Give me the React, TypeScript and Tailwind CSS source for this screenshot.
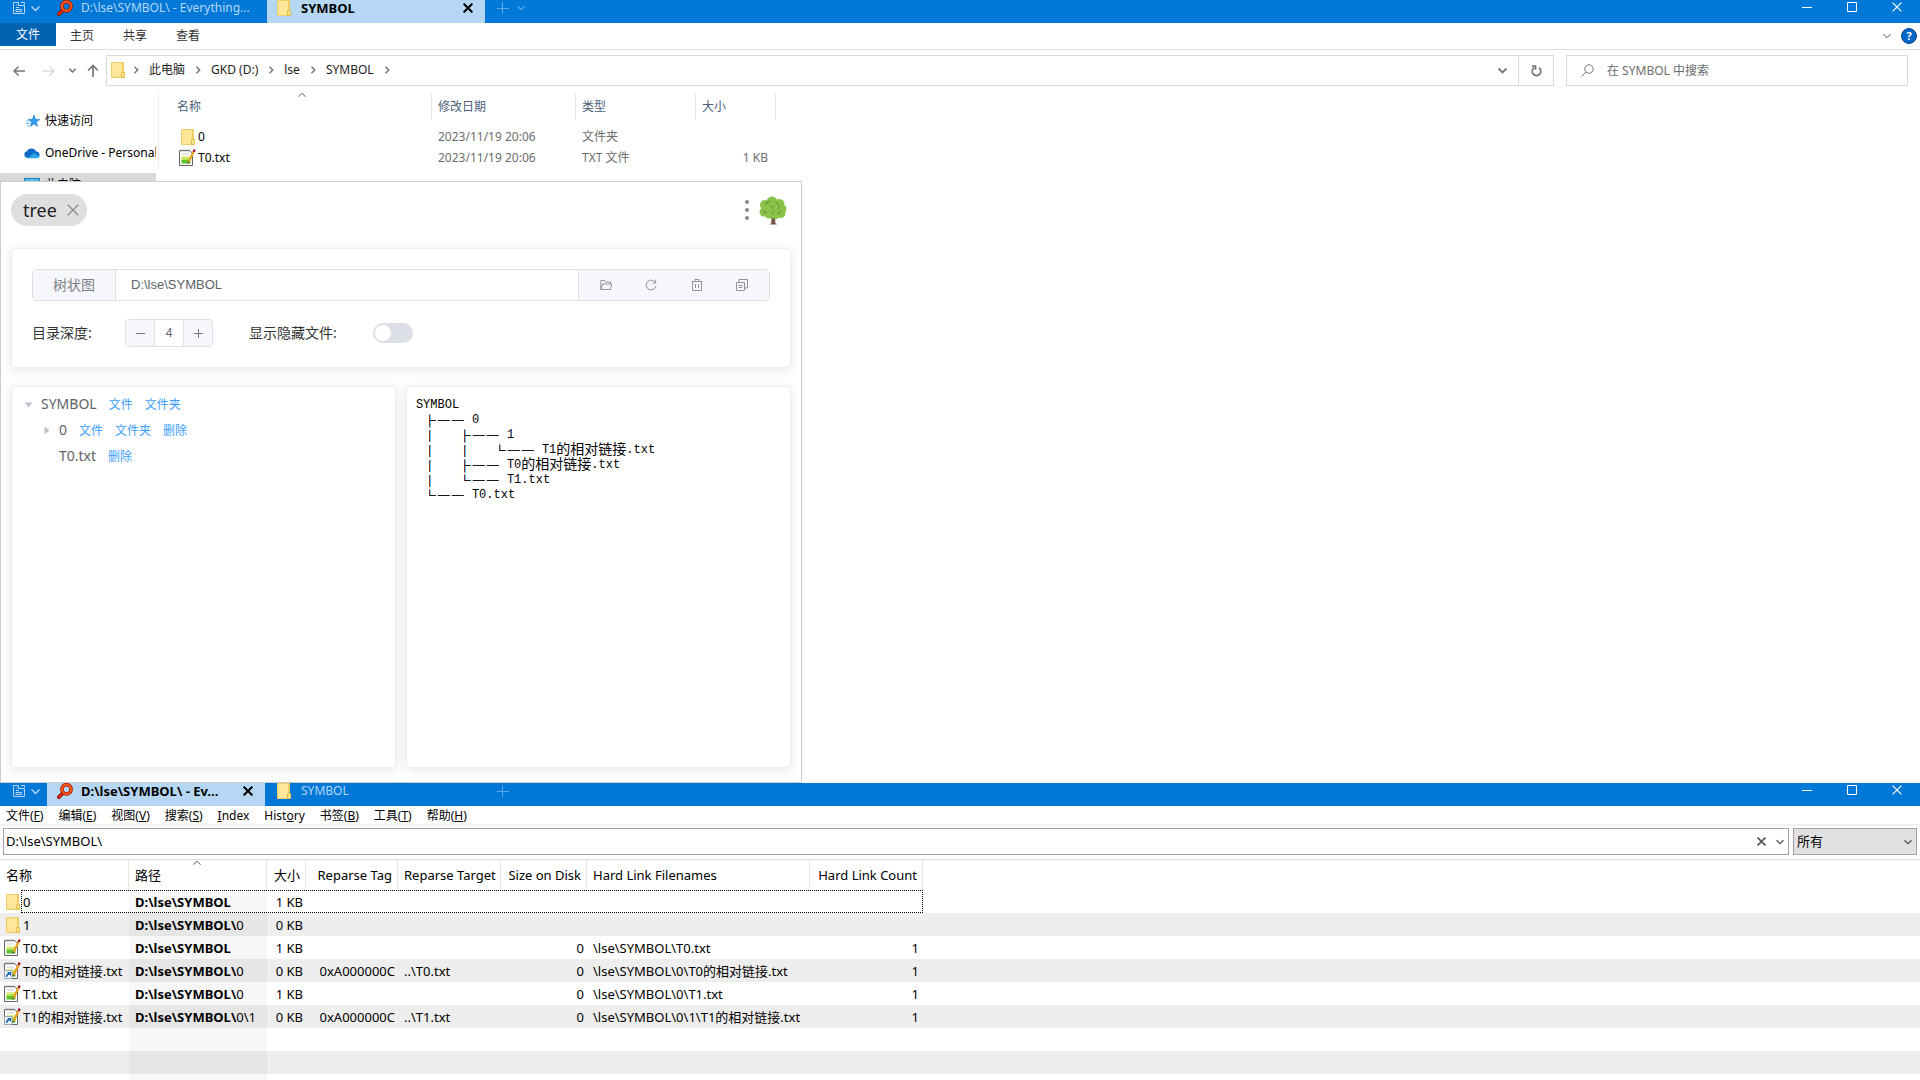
import type { ReactNode } from 'react'

const FolderIcon = () => (
  <svg width="14" height="16" viewBox="0 0 14 16" className="shrink-0">
    <path d="M.5.5h11v15H.5z" fill="#ffe699" stroke="#f0cd62" />
    <path d="M11.5.5h1v9h-1z" fill="#ffe699" stroke="#f0cd62" />
    <path d="M10.500 10.500h3v5h-3z" fill="#ffe38c" stroke="#e5bd47" />
  </svg>
)

const NoteIcon = ({ link }: { link?: boolean }) => (
  <svg width="17" height="17" viewBox="0 0 17 17" className="shrink-0">
    <path d="M.5 1.500h10l3 3v12H.5z" fill="#fff" stroke="#666" />
    <path d="M2 .5v2M4 .5v2M6 .5v2M8 .5v2M10 .5v2" stroke="#888" strokeWidth="1" />
    <path d="M2.500 7h9v3h-9z" fill="#e3f08e" />
    <path d="M2.500 9h9v2.500h-9z" fill="#b5e05a" />
    <path d="M2.500 11h9v3.500h-9z" fill="#5cc22a" />
    <path d="M3 5h7" stroke="#ccc" />
    <path d="M9.500 13l5-10" stroke="#e8a21c" strokeWidth="2.200" />
    <path d="M8.500 15l.2-2.500 1.800 1z" fill="#443" />
    <path d="M14.500 3l1.200-2.500" stroke="#9b1220" strokeWidth="2.200" />
    {link && (
      <>
        <path d="M.5 8.500H8v8H.5z" fill="#f4f8fc" stroke="#9aa7b5" />
        <path d="M2.500 15c0-1.800.8-2.800 2.500-3.300" fill="none" stroke="#1762b8" strokeWidth="1.500" />
        <path d="M3 10h4v4z" fill="#1762b8" />
      </>
    )}
  </svg>
)

const EverythingIcon = () => (
  <svg width="16" height="16" viewBox="0 0 16 16" className="shrink-0">
    <path d="M6 10L1.800 14.200" stroke="#8f1200" strokeWidth="3.800" strokeLinecap="round" />
    <path d="M6 10L1.800 14.200" stroke="#e02f0c" strokeWidth="2.200" strokeLinecap="round" />
    <circle cx="9.500" cy="6.300" r="4.600" fill="none" stroke="#9b1500" strokeWidth="3.600" />
    <circle cx="9.500" cy="6.300" r="4.600" fill="none" stroke="#ff5416" strokeWidth="2.200" />
  </svg>
)

const Chevron = ({ dir = 'down', size = 8, width = 1.3 }: { dir?: 'down' | 'up' | 'right'; size?: number; width?: number }) => (
  <svg width={size} height={size} viewBox="0 0 8 8" fill="none" stroke="currentColor" strokeWidth={width} className="shrink-0">
    <path d={{ down: 'M.5 2.200L4 5.700l3.500-3.500', up: 'M.5 5.700L4 2.200l3.500 3.500', right: 'M2.500.8L5.700 4 2.500 7.200' }[dir]} />
  </svg>
)

const Cross = ({ size = 10, width = 1.2 }: { size?: number; width?: number }) => (
  <svg width={size} height={size} viewBox="0 0 10 10" stroke="currentColor" strokeWidth={width} className="shrink-0">
    <path d="M.6.6l8.800 8.800M9.400.6L.6 9.400" />
  </svg>
)

const Plus = () => (
  <svg width="12" height="12" viewBox="0 0 12 12" stroke="currentColor" className="shrink-0">
    <path d="M0 6.500h12M5.500 0v12" />
  </svg>
)

const TreeLogo = () => (
  <svg width="28" height="29" viewBox="0 0 28 29" className="shrink-0">
    <path d="M12.500 18h3.500l.3 9 1.700 1.500h-7l1.300-1.500z" fill="#795548" />
    <g fill="#8bc34a">
      <circle cx="13" cy="6" r="5.500" />
      <circle cx="6" cy="9" r="5" />
      <circle cx="20.500" cy="8" r="5" />
      <circle cx="5" cy="16" r="4.500" />
      <circle cx="23.500" cy="13" r="4" />
      <circle cx="22" cy="17.500" r="4.500" />
      <circle cx="10" cy="18.500" r="4" />
      <circle cx="16.500" cy="19" r="4" />
      <circle cx="14" cy="12" r="8" />
    </g>
    <path
      d="M6 10c.5-3 2-4 4-4.300M8 7.500c1-2 2-2.300 4-2.500M16 6c2 .3 3 1.500 3.500 3M20 9.500c.5 1.500 0 2.500-1 3M11 10c2 0 3 1.500 3 3.500M5 14c0 2 1 3 3 3.300M13 18c.3-2 1-2.500 2.500-3M18 17.500c2 0 3-.8 3.500-2.500"
      fill="none"
      stroke="#689f38"
      strokeWidth="1.200"
    />
  </svg>
)

const WindowButtons = () => (
  <div className="ml-auto mr-[18px] flex h-[14px] items-center gap-[35px] text-white">
    <button aria-label="最小化">
      <svg width="10" height="10" viewBox="0 0 10 10" stroke="currentColor"><path d="M0 5.500h10" /></svg>
    </button>
    <button aria-label="最大化">
      <svg width="10" height="10" viewBox="0 0 10 10" fill="none" stroke="currentColor"><path d="M.5.5h9v9h-9z" /></svg>
    </button>
    <button aria-label="关闭"><Cross /></button>
  </div>
)

const TabMenu = () => (
  <div className="flex h-4 w-[47px] shrink-0 items-center gap-[6px] pl-[13px] text-[#b5d7f3]">
    <svg width="12" height="12" viewBox="0 0 12 12" fill="none" stroke="currentColor">
      <path d="M.5.5h5v3h6v8H.5zM8 .5h3.500v2M3 5.500h3M3 7.500h5.500v2H3zM3 3h1" />
    </svg>
    <Chevron size={9} />
  </div>
)

const Tab = ({ icon, title, active }: { icon: ReactNode; title: string; active?: boolean }) => (
  <div className={active ? 'flex h-full w-[218px] shrink-0 bg-[#b5d7f3] text-black' : 'flex h-full w-[218px] shrink-0 text-[#b5d7f3]'}>
    <div className="flex h-[15px] w-full items-center pl-[10px] pr-3">
      <span className="flex w-6 shrink-0">{icon}</span>
      <span className={active ? 'truncate text-[13px] font-bold leading-4' : 'truncate leading-4'}>{title}</span>
      {active && <button aria-label="关闭标签页" className="ml-auto pl-2"><Cross width={2} /></button>}
    </div>
  </div>
)

const Explorer = () => {
  const files = [
    { name: '0', type: '文件夹', size: '', icon: <FolderIcon /> },
    { name: 'T0.txt', type: 'TXT 文件', size: '1 KB', icon: <NoteIcon /> },
  ]
  return (
    <section className="h-[181px] shrink-0 overflow-hidden">
      <header className="flex h-[23px] bg-[#0078d7]">
        <TabMenu />
        <div className="flex w-[220px]"><Tab icon={<EverythingIcon />} title="D:\lse\SYMBOL\ - Everything..." /></div>
        <Tab icon={<FolderIcon />} title="SYMBOL" active />
        <div className="flex h-[15px] items-center gap-2 pl-3 text-[#5ba8e6]">
          <button aria-label="新建标签页"><Plus /></button>
          <Chevron />
        </div>
        <WindowButtons />
      </header>

      <nav className="flex h-[27px] border-b border-[#dadbdc] text-[#333]">
        <button className="h-[23px] w-14 bg-[#0063b1] text-white">文件</button>
        <button className="ml-[14px] h-[25px]">主页</button>
        <button className="ml-[29px] h-[25px]">共享</button>
        <button className="ml-[29px] h-[25px]">查看</button>
        <div className="ml-auto mr-[3px] flex items-center gap-[10px] text-[#999]">
          <Chevron />
          <button aria-label="帮助" className="h-4 w-4 rounded-full border border-[#0b4a86] bg-[#0066c8] text-[11px] font-bold leading-[14px] text-white">?</button>
        </div>
      </nav>

      <div className="flex h-[41px] items-center pr-3 text-[#777]">
        <div className="flex w-[106px] shrink-0 items-center pl-[13px]">
          <svg width="12" height="12" viewBox="0 0 12 12" fill="none" stroke="currentColor" strokeWidth="1.500"><path d="M12 6H1M5.500 1.500L1 6l4.500 4.500" /></svg>
          <svg width="12" height="12" viewBox="0 0 12 12" fill="none" stroke="#ddd" strokeWidth="1.500" className="ml-[18px]"><path d="M0 6h11M6.500 1.500L11 6l-4.500 4.500" /></svg>
          <span className="ml-[14px]"><Chevron size={7} width={1.8} /></span>
          <svg width="12" height="14" viewBox="0 0 12 14" fill="none" stroke="currentColor" strokeWidth="1.700" className="ml-[11px]"><path d="M6 13V2M1 6.500l5-5 5 5" /></svg>
        </div>
        <div className="flex h-[31px] flex-1 border border-[#d9d9d9]">
          <div className="flex flex-1 items-center gap-[9px] pb-px pl-1 text-[#1e1e1e]">
            <span className="flex w-3"><FolderIcon /></span>
            {['此电脑', 'GKD (D:)', 'lse', 'SYMBOL'].map((p) => (
              <span key={p} className="flex items-center gap-[9px]">
                <span className="text-[#777]"><Chevron dir="right" width={1.5} /></span>
                <a href="#">{p}</a>
              </span>
            ))}
            <span className="text-[#777]"><Chevron dir="right" width={1.5} /></span>
            <span className="ml-auto mr-[11px] text-[#777]"><Chevron size={9} width={1.8} /></span>
          </div>
          <button aria-label="刷新" className="flex w-[35px] items-center justify-center border-l border-[#d9d9d9]">
            <svg width="11" height="12" viewBox="0 0 11 12" fill="none" stroke="currentColor" strokeWidth="1.700"><path d="M3 2.800A4.300 4.300 0 1 0 8 2.800M1 1.200h3.500v3.500" /></svg>
          </button>
        </div>
        <label className="ml-3 flex h-[31px] w-[342px] items-center border border-[#d9d9d9] pl-[14px]">
          <svg width="13" height="13" viewBox="0 0 13 13" fill="none" stroke="currentColor" className="shrink-0"><circle cx="8" cy="5" r="4.200" /><path d="M5 8L.5 12.500" /></svg>
          <input aria-label="搜索" placeholder="在 SYMBOL 中搜索" className="ml-[13px] w-full outline-none placeholder:text-[#6d6d6d]" />
        </label>
      </div>

      <div className="flex">
        <aside className="w-[156px] shrink-0 overflow-hidden whitespace-nowrap pt-[14px] text-black">
          <div className="flex h-8 items-center pl-[26px]">
            <svg width="14" height="14" viewBox="0 0 14 14"><path d="M8 1l1.500 4.200 4.300.2-3.400 2.700 1.100 4.200L8 10l-3.600 2.300 1.200-4.200L2.200 5.400l4.300-.2z" fill="#2f9bea" stroke="#1c7ecb" strokeWidth=".6" /><path d="M0 7h3M0 9.500h4M1 12h2.500" stroke="#62b6ef" /></svg>
            <span className="ml-[5px]">快速访问</span>
          </div>
          <div className="flex h-8 items-center pl-6">
            <svg width="16" height="12" viewBox="0 0 16 12" className="shrink-0"><path d="M3.500 11A3.400 3.400 0 0 1 3 4.300 4.900 4.900 0 0 1 12 4.500 3.300 3.300 0 0 1 13 11z" fill="#0f6cc9" /><path d="M3.500 11.200L10 6l5.400 3.300c-.5 1.200-1.400 1.900-2.500 1.900z" fill="#28a8ea" /></svg>
            <span className="ml-[5px]">OneDrive - Personal</span>
          </div>
          <div className="mt-1 flex h-8 items-start bg-[#d9d9d9] pl-6 pt-1">
            <svg width="16" height="14" viewBox="0 0 16 14" className="mt-px"><path d="M.5.5h15v10H.5z" fill="#58bdf5" stroke="#1779b8" /></svg>
            <span className="ml-[5px]">此电脑</span>
          </div>
        </aside>
        <table className="ml-[2px] table-fixed border-separate border-spacing-0 self-start border-l border-[#f0f0f0] text-left text-[#6d6d6d]">
          <colgroup>
            <col className="w-[273px]" /><col className="w-[144px]" /><col className="w-[120px]" /><col className="w-[80px]" />
          </colgroup>
          <thead className="text-[#4c607a]">
            <tr className="h-[35px] align-top">
              {['名称', '修改日期', '类型', '大小'].map((h, i) => (
                <th key={h} className="relative p-0 font-normal">
                  <div className={i ? 'mt-[2px] h-[27px] border-r border-[#e5e5e5] pl-[6px] leading-[28px]' : 'mt-[2px] h-[27px] border-r border-[#e5e5e5] pl-[18px] leading-[28px]'}>{h}</div>
                  {i === 0 && <span className="absolute left-[139px] top-0"><Chevron dir="up" width={1} /></span>}
                </th>
              ))}
            </tr>
          </thead>
          <tbody>
            {files.map((f) => (
              <tr key={f.name} className="h-[21px]">
                <td className="p-0 pl-[18px] text-black">
                  <div className="flex h-[21px] items-center"><span className="flex w-[21px] justify-center">{f.icon}</span>{f.name}</div>
                </td>
                <td className="p-0 pl-[6px]">2023/11/19 20:06</td>
                <td className="p-0 pl-[6px]">{f.type}</td>
                <td className="p-0 pr-2 text-right">{f.size}</td>
              </tr>
            ))}
          </tbody>
        </table>
      </div>
    </section>
  )
}

const card = 'rounded border border-[#ebeef5] bg-white shadow-[0_2px_12px_rgba(0,0,0,0.1)]'

const TreeNode = ({ label, links, indent, caret }: { label: string; links: string[]; indent?: boolean; caret?: 'open' | 'closed' }) => (
  <li className={indent ? 'flex h-[26px] items-center pl-[30px]' : 'flex h-[26px] items-center pl-3'}>
    <span className="flex w-[17px] shrink-0">
      {caret === 'open' && <svg width="9" height="9" viewBox="0 0 9 9" fill="#c0c4cc"><path d="M.5 2.500h8l-4 5z" /></svg>}
      {caret === 'closed' && <svg width="9" height="9" viewBox="0 0 9 9" fill="#c0c4cc"><path d="M2.500.5v8l5-4z" /></svg>}
    </span>
    <span className="text-sm text-[#606266]">{label}</span>
    {links.map((l) => <a key={l} href="#" className="ml-3 pt-px text-xs text-[#409eff]">{l}</a>)}
  </li>
)

// each guide takes a full-width cell, '.' is a half-width gap
const lines = [
  ['', 'SYMBOL'],
  ['.├──.', '0'],
  ['.│...├──.', '1'],
  ['.│...│...└──.', 'T1的相对链接.txt'],
  ['.│...├──.', 'T0的相对链接.txt'],
  ['.│...└──.', 'T1.txt'],
  ['.└──.', 'T0.txt'],
]

const TreePlugin = () => (
  <main className="h-[602px] w-[802px] shrink-0 border border-[#ccc] bg-white px-[10px] pt-3">
    <header className="flex h-8 items-center justify-between">
      <div className="flex h-8 items-center gap-[10px] rounded-full bg-[#dfdfdf] pl-3 pr-2 text-[#222]">
        <h1 className="text-lg">tree</h1>
        <button aria-label="退出" className="text-[#888]"><Cross size={12} width={1} /></button>
      </div>
      <div className="flex items-center gap-[10px] pr-1">
        <button aria-label="更多">
          <svg width="4" height="20" viewBox="0 0 4 20" fill="#888"><circle cx="2" cy="2" r="2" /><circle cx="2" cy="10" r="2" /><circle cx="2" cy="18" r="2" /></svg>
        </button>
        <TreeLogo />
      </div>
    </header>

    <section className={`${card} mt-[22px] p-5`}>
      <div className="flex h-8 rounded border border-[#dcdfe6] text-[#909399]">
        <label htmlFor="root-dir" className="flex w-[83px] items-center justify-center border-r border-[#dcdfe6] bg-[#f5f7fa] text-sm text-[#7d8087]">树状图</label>
        <input id="root-dir" defaultValue="D:\lse\SYMBOL" className="min-w-0 flex-1 pl-[15px] font-['Liberation_Sans',sans-serif] text-[13px] text-[#606266] outline-none" />
        <div className="flex w-[191px] items-center justify-between border-l border-[#dcdfe6] bg-[#f5f7fa] px-[21px]">
          <button aria-label="打开">
            <svg width="12" height="12" viewBox="0 0 12 12" fill="none" stroke="currentColor"><path d="M.8 10.500v-9h3.700l1.200 1.500h4.800v2M.8 10.500L2.700 5h8.800l-1 5.500z" /></svg>
          </button>
          <button aria-label="重新加载">
            <svg width="12" height="12" viewBox="0 0 12 12" fill="none" stroke="currentColor"><path d="M10.300 3.500A4.900 4.900 0 1 0 10.900 7M10.700.8v3.200H7.500" /></svg>
          </button>
          <button aria-label="清空">
            <svg width="12" height="12" viewBox="0 0 12 12" fill="none" stroke="currentColor"><path d="M.5 2.500h11M4 2.500v-2h4v2M1.500 2.500v9h9v-9M4.500 5v4M7.500 5v4" /></svg>
          </button>
          <button aria-label="复制">
            <svg width="12" height="12" viewBox="0 0 12 12" fill="none" stroke="currentColor"><path d="M.5 3.500h8v8H.5zM3 3V.5h8.500V9H9M2.500 6.500h4M2.500 8.500h4" /></svg>
          </button>
        </div>
      </div>
      <div className="mt-[18px] flex h-[28px] items-center text-sm text-[#333]">
        <label htmlFor="depth" className="w-[93px]">目录深度:</label>
        <div className="flex h-[28px] w-[88px] overflow-hidden rounded border border-[#dcdfe6] text-[#777]">
          <button aria-label="减少" className="flex w-[29px] items-center justify-center border-r border-[#dcdfe6] bg-[#f5f7fa]">
            <svg width="9" height="9" viewBox="0 0 9 9" stroke="currentColor"><path d="M0 4.500h9" /></svg>
          </button>
          <input id="depth" defaultValue="4" className="w-7 text-center font-['Liberation_Sans',sans-serif] text-xs text-[#606266] outline-none" />
          <button aria-label="增加" className="flex w-[29px] items-center justify-center border-l border-[#dcdfe6] bg-[#f5f7fa]">
            <svg width="9" height="9" viewBox="0 0 9 9" stroke="currentColor"><path d="M0 4.500h9M4.500 0v9" /></svg>
          </button>
        </div>
        <label htmlFor="hidden-files" className="ml-9 w-[124px]">显示隐藏文件:</label>
        <input
          id="hidden-files"
          type="checkbox"
          className="flex h-5 w-10 appearance-none items-center rounded-full bg-[#dcdfe6] px-[2px] before:h-4 before:w-4 before:rounded-full before:bg-white"
        />
      </div>
    </section>

    <div className="mt-[18px] flex gap-[10px]">
      <ul className={`${card} h-[382px] w-1/2 py-1`}>
        <TreeNode label="SYMBOL" links={['文件', '文件夹']} caret="open" />
        <TreeNode label="0" links={['文件', '文件夹', '删除']} caret="closed" indent />
        <TreeNode label="T0.txt" links={['删除']} indent />
      </ul>
      <div className={`${card} h-[382px] w-1/2 px-[9px] pt-[11px] font-['Liberation_Mono','Noto_Sans_CJK_SC',monospace] text-xs text-black`}>
        {lines.map(([guides, name], i) => (
          <div key={i} className="flex h-[15px] items-center leading-[15px]">
            {[...guides].map((g, j) => (g === '.'
              ? <span key={j} className="w-[7px]" />
              : <span key={j} className="w-[14px] text-center font-['Noto_Sans_CJK_SC',sans-serif] font-bold [text-shadow:0_0_0_#000,0_0_0_#000]">{g}</span>
            ))}
            {name.split(/(的相对链接)/).map((s, j) => <span key={j} className={j % 2 ? 'text-sm leading-[15px]' : ''}>{s}</span>)}
          </div>
        ))}
      </div>
    </div>
  </main>
)

const menus = [['文件(', 'F', ')'], ['编辑(', 'E', ')'], ['视图(', 'V', ')'], ['搜索(', 'S', ')'], ['', 'I', 'ndex'], ['Hist', 'o', 'ry'], ['书签(', 'B', ')'], ['工具(', 'T', ')'], ['帮助(', 'H', ')']]

const results = [
  { name: '0', sub: '', size: '1 KB', kind: 'folder' },
  { name: '1', sub: '\\0', size: '0 KB', kind: 'folder' },
  { name: 'T0.txt', sub: '', size: '1 KB', kind: 'note', hard: '\\lse\\SYMBOL\\T0.txt' },
  { name: 'T0的相对链接.txt', sub: '\\0', size: '0 KB', kind: 'link', target: '..\\T0.txt', hard: '\\lse\\SYMBOL\\0\\T0的相对链接.txt' },
  { name: 'T1.txt', sub: '\\0', size: '1 KB', kind: 'note', hard: '\\lse\\SYMBOL\\0\\T1.txt' },
  { name: 'T1的相对链接.txt', sub: '\\0\\1', size: '0 KB', kind: 'link', target: '..\\T1.txt', hard: '\\lse\\SYMBOL\\0\\1\\T1的相对链接.txt' },
]

const th = 'relative border-r border-[#e5e5e5] p-0 pt-px font-normal'
const td = 'p-0 pt-[2px]'

const Everything = () => (
  <section className="flex min-h-0 flex-1 flex-col overflow-hidden text-black">
    <header className="flex h-[23px] shrink-0 bg-[#0078d7]">
      <TabMenu />
      <Tab icon={<EverythingIcon />} title="D:\lse\SYMBOL\ - Ev..." active />
      <div className="ml-[2px] flex"><Tab icon={<FolderIcon />} title="SYMBOL" /></div>
      <div className="flex h-[15px] items-center pl-3 text-[#5ba8e6]">
        <button aria-label="新建标签页"><Plus /></button>
      </div>
      <WindowButtons />
    </header>
    <nav className="flex h-5 shrink-0 items-center gap-[15px] border-b-2 border-[#f0f0f0] pl-[6px] pt-px">
      {menus.map(([a, k, b]) => <button key={k} className="leading-4">{a}<u>{k}</u>{b}</button>)}
    </nav>
    <div className="flex h-[34px] shrink-0 gap-1 border-b border-[#dcdcdc] px-[3px] pt-[2px] text-[13px]">
      <div className="flex h-[27px] flex-1 items-center border border-[#a0a0a8] pl-[2px] pr-1 text-[#555]">
        <input aria-label="搜索" defaultValue="D:\lse\SYMBOL\" className="min-w-0 flex-1 text-black outline-none" />
        <button aria-label="清除" className="mr-[10px]"><Cross size={9} width={1.8} /></button>
        <Chevron />
      </div>
      <div className="relative w-[124px]">
        <select aria-label="筛选" className="h-[27px] w-full appearance-none border border-[#a0a0a8] bg-[#e1e1e1] pl-[3px]">
          <option>所有</option>
        </select>
        <span className="pointer-events-none absolute right-[5px] top-[10px] text-[#555]"><Chevron /></span>
      </div>
    </div>
    <table className="w-full shrink-0 table-fixed border-separate border-spacing-0 whitespace-nowrap text-left text-[13px]">
      <colgroup>
        <col className="w-[129px]" /><col className="w-[138px]" /><col className="w-[39px]" /><col className="w-[92px]" /><col className="w-[103px]" />
        <col className="w-[86px]" /><col className="w-[223px]" /><col className="w-[113px]" /><col />
      </colgroup>
      <thead>
        <tr className="h-[30px]">
          <th className={`${th} pl-[6px]`}>名称</th>
          <th className={`${th} pl-[6px]`}>
            路径
            <span className="absolute left-[64px] top-[-1px] text-[#555]"><Chevron dir="up" width={1} /></span>
          </th>
          <th className={`${th} pr-[5px] text-right`}>大小</th>
          <th className={`${th} pr-[5px] text-right`}>Reparse Tag</th>
          <th className={`${th} pl-[6px]`}>Reparse Target</th>
          <th className={`${th} pr-[5px] text-right`}>Size on Disk</th>
          <th className={`${th} pl-[6px]`}>Hard Link Filenames</th>
          <th className={`${th} pr-[5px] text-right`}>Hard Link Count</th>
          <th />
        </tr>
      </thead>
      <tbody>
        {results.map((r, i) => (
          <tr key={r.name} className="relative h-[23px] even:bg-[#eee]">
            <td className="p-0">
              <div className="flex h-[23px] items-center">
                <span className="flex w-[23px] pl-[4px]">
                  {r.kind === 'folder' ? <span className="pl-[2px]"><FolderIcon /></span> : <NoteIcon link={r.kind === 'link'} />}
                </span>
                <span className="pt-[2px]">{r.name}</span>
              </div>
              {i === 0 && <div className="absolute left-[21px] top-0 h-[23px] w-[902px] border border-dotted border-black" />}
            </td>
            <td className={`${td} bg-black/3 pl-[6px]`}><b>D:\lse\SYMBOL{r.sub && '\\'}</b>{r.sub.slice(1)}</td>
            <td className={`${td} pr-[3px] text-right`}>{r.size}</td>
            <td className={`${td} pr-[3px] text-right`}>{r.target && '0xA000000C'}</td>
            <td className={`${td} pl-[6px]`}>{r.target}</td>
            <td className={`${td} pr-[3px] text-right`}>{r.hard && '0'}</td>
            <td className={`${td} pl-[6px]`}>{r.hard}</td>
            <td className={`${td} pr-1 text-right`}>{r.hard && '1'}</td>
            <td />
          </tr>
        ))}
        {[7, 8, 9].map((n) => (
          <tr key={n} className="h-[23px] even:bg-[#eee]">
            <td />
            <td className="bg-black/3" />
            <td colSpan={7} />
          </tr>
        ))}
      </tbody>
    </table>
  </section>
)

export default function App() {
  return (
    <div className="flex h-screen flex-col overflow-hidden bg-white font-['Noto_Sans','Noto_Sans_CJK_SC',sans-serif] text-xs">
      <Explorer />
      <TreePlugin />
      <Everything />
    </div>
  )
}
